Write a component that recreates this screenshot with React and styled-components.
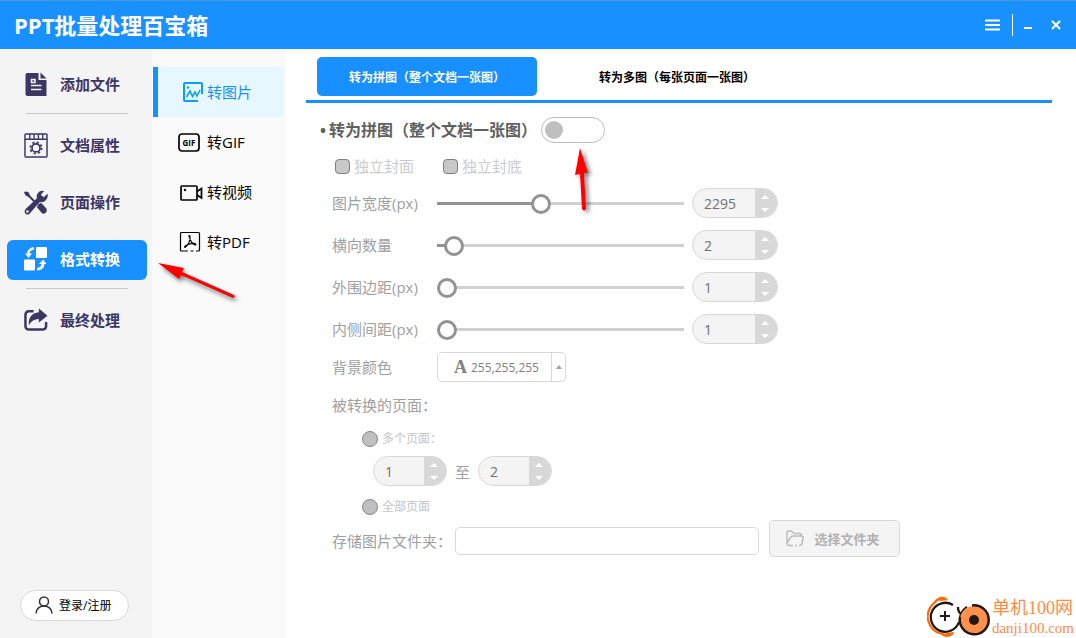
import React, { useState } from 'react'
import styled, { createGlobalStyle, css } from 'styled-components'

const GlobalStyle = createGlobalStyle`
    * {
        box-sizing: border-box;
    }

    body {
        margin: 0;
        background: #ffffff;
        font-family: "Open Sans", "Noto Sans CJK SC", sans-serif;
        font-size: 15px;
        color: #000000;
    }

    button, input, select {
        font-family: inherit;
        font-size: inherit;
        margin: 0;
    }
`

const Window = styled.div`
    position: relative;
    min-height: 100vh;
    display: flex;
    flex-direction: column;
`

const TitleBar = styled.header`
    height: 49px;
    padding: 0 12px 0 14px;
    border-top: 1px solid #4c9ad8;
    background: #1890ff;
    display: flex;
    align-items: center;
    justify-content: space-between;
`

const AppTitle = styled.h1`
    margin: 0;
    font-size: 22px;
    line-height: 32px;
    font-weight: bold;
    color: #ffffff;
`

const WindowActions = styled.div`
    display: flex;
    align-items: center;
    gap: 12px;
`

const WindowButton = styled.button`
    width: 16px;
    height: 22px;
    padding: 0;
    border: none;
    background: none;
    color: #ffffff;
    display: flex;
    align-items: center;
    justify-content: center;
`

const WindowDivider = styled.span`
    width: 1px;
    height: 22px;
    margin-right: -5px;
    background: #ffffff;
`

const Body = styled.div`
    flex: 1;
    display: flex;
`

const Sidebar = styled.nav`
    flex: 0 0 152px;
    padding: 16px 5px 17px 7px;
    background: #f4f4f4;
    display: flex;
    flex-direction: column;
`

const SideGroup = styled.div`
    display: flex;
    flex-direction: column;
    gap: 17px;
`

const SideDivider = styled.hr`
    width: 102px;
    height: 1px;
    margin: 8px 0 12px 19px;
    border: none;
    background: #c8c8c8;
    flex-shrink: 0;
`

const SideItem = styled.button`
    position: relative;
    height: 40px;
    padding: 0 0 2px 17px;
    border: none;
    border-radius: 6px;
    background: none;
    color: #3c3664;
    font-weight: bold;
    line-height: 20px;
    display: flex;
    align-items: center;
    gap: 12px;

    ${({ $active }) => $active && css`
        background: #1890ff;
        color: #ffffff;
    `}
`

const LoginButton = styled.button`
    width: 109px;
    height: 31px;
    margin: auto 0 0 13px;
    padding: 0 0 1px 14px;
    border: 1px solid #d8d8d8;
    border-radius: 16px;
    background: #ffffff;
    color: #000000;
    font-size: 12px;
    display: flex;
    align-items: center;
    gap: 6px;
`

const SubNav = styled.nav`
    flex: 0 0 134px;
    padding: 18px 2px 0 1px;
    background: #fafafa;
`

const SubItem = styled.button`
    width: 100%;
    height: 50px;
    padding: 0 0 0 20px;
    border: none;
    border-left: 5px solid transparent;
    background: none;
    color: #000000;
    line-height: 20px;
    display: flex;
    align-items: center;
    gap: 4px;

    ${({ $active }) => $active && css`
        border-left-color: #1890ff;
        background: #e6f7ff;
        color: #1890ff;
    `}
`

const Main = styled.main`
    flex: 1;
    min-width: 0;
    padding: 8px 24px 24px 20px;
`

const Tabs = styled.div`
    padding: 0 11px 4px;
    border-bottom: 3px solid #1890ff;
    display: flex;
    gap: 30px;
`

const Tab = styled.button`
    width: 220px;
    height: 39px;
    padding: 0;
    border: none;
    border-radius: 5px;
    background: ${({ $active }) => ($active ? '#1890ff' : 'transparent')};
    color: ${({ $active }) => ($active ? '#ffffff' : '#000000')};
    font-size: 12px;
    font-weight: bold;
`

const Form = styled.form`
    padding: 14px 0 0 26px;
    color: #a0a0a0;
`

const Heading = styled.div`
    height: 26px;
    margin-left: -15px;
    display: flex;
    align-items: center;
    gap: 4px;
`

const HeadingLabel = styled.label`
    font-size: 16px;
    line-height: 24px;
    font-weight: bold;
    color: #606060;
    display: flex;

    &::before {
        content: "•";
        width: 12px;
        text-align: center;
    }
`

const ToggleWrapper = styled.div`
    position: relative;
    height: 26px;
`

const Toggle = styled.input`
    appearance: none;
    width: 64px;
    height: 26px;
    padding: 0 3px;
    border: 1px solid #bcbcbc;
    border-radius: 13px;
    background: #ffffff;
    display: flex;
    align-items: center;

    &::before {
        content: "";
        width: 18px;
        height: 18px;
        border-radius: 50%;
        background: #bfbfbf;
    }

    &:checked {
        justify-content: flex-end;
        border-color: #1890ff;
    }

    &:checked::before {
        background: #1890ff;
    }
`

const CheckRow = styled.div`
    height: 20px;
    margin: 13px 0 12px 3px;
    display: flex;
    align-items: center;
    gap: 29px;
`

const CheckLabel = styled.label`
    color: #cccccc;
    line-height: 20px;
    display: flex;
    align-items: center;
    gap: 4px;
`

const Checkbox = styled.input`
    appearance: none;
    width: 15px;
    height: 15px;
    border: 1px solid #808080;
    border-radius: 4px;
    background: #c8c8c8;

    &:checked {
        background: #1890ff;
    }
`

const SliderRows = styled.div`
    display: flex;
    flex-direction: column;
    gap: 12px;
`

const Row = styled.div`
    height: 30px;
    display: flex;
    align-items: center;
`

const RowLabel = styled.label`
    flex: 0 0 105px;
    line-height: 20px;
`

const Slider = styled.input`
    appearance: none;
    flex: 0 1 247px;
    min-width: 80px;
    height: 20px;
    margin-right: 8px;
    background: none;

    &::-webkit-slider-runnable-track {
        height: 3px;
        background: linear-gradient(to right, #939393 var(--fill), #d0d0d0 var(--fill));
    }

    &::-webkit-slider-thumb {
        appearance: none;
        width: 20px;
        height: 20px;
        margin-top: -8px;
        border: 3px solid #939393;
        border-radius: 50%;
        background: #ffffff;
    }
`

const SpinBox = styled.div`
    width: ${({ $small }) => ($small ? '74px' : '86px')};
    height: 30px;
    border: 1px solid #d8d8d8;
    border-radius: 15px;
    background: #f4f4f4;
    overflow: hidden;
    display: flex;
`

const SpinInput = styled.input`
    appearance: textfield;
    flex: 1;
    min-width: 0;
    padding: 0 0 0 11px;
    border: none;
    background: none;
    color: #707070;
    font-size: 14px;

    &::-webkit-inner-spin-button {
        display: none;
    }
`

const SpinButtons = styled.div`
    width: 22px;
    padding: 1px 2px 1px 0;
    background: #d8d8d8;
    display: flex;
    flex-direction: column;
`

const SpinButton = styled.button`
    flex: 1;
    padding: 0;
    border: none;
    background: none;
    color: #ffffff;
    display: flex;
    align-items: center;
    justify-content: center;
`

const ColorRow = styled(Row)`
    margin-top: 8px;
`

const ColorBox = styled.div`
    width: 129px;
    height: 30px;
    border: 1px solid #d8d8d8;
    border-radius: 5px;
    background: #ffffff;
    display: flex;
    align-items: center;
`

const ColorLetter = styled.span`
    margin-left: 16px;
    font-family: "Liberation Serif", serif;
    font-size: 18px;
    line-height: 20px;
    font-weight: bold;
    color: #808080;
`

const ColorSelect = styled.select`
    appearance: none;
    flex: 1;
    min-width: 0;
    padding: 0 0 0 4px;
    border: none;
    background: none;
    color: #808080;
    opacity: 1;
    font-size: 12px;
`

const ColorArrow = styled.span`
    width: 14px;
    height: 28px;
    border-left: 1px solid #d8d8d8;
    color: #a0a0a0;
    display: flex;
    align-items: center;
    justify-content: center;
`

const PageRange = styled.fieldset`
    min-width: 0;
    margin: 12px 0 4px;
    padding: 0;
    border: none;
`

const Legend = styled.legend`
    height: 24px;
    padding: 0;
    margin-bottom: 12px;
    line-height: 22px;
`

const RadioLabel = styled.label`
    height: 18px;
    margin-left: 30px;
    color: #c4c4c4;
    font-size: 12px;
    line-height: 18px;
    display: flex;
    align-items: center;
    gap: 4px;
`

const Radio = styled.input`
    appearance: none;
    width: 16px;
    height: 16px;
    border: 1px solid #868686;
    border-radius: 50%;
    background: #c0c0c0;
`

const RangeRow = styled(Row)`
    margin: 8px 0 12px 41px;
    gap: 8px;
`

const FolderRow = styled.div`
    display: flex;
    align-items: flex-end;
`

const FolderLabel = styled.label`
    flex: 0 0 123px;
    line-height: 28px;
`

const FolderInput = styled.input`
    flex: 0 1 304px;
    min-width: 80px;
    height: 28px;
    margin-right: 10px;
    padding: 0 8px;
    border: 1px solid #d8d8d8;
    border-radius: 5px;
    background: #ffffff;
`

const FolderButton = styled.button`
    width: 131px;
    height: 37px;
    margin-bottom: -2px;
    padding: 0 3px 0 0;
    border: 1px solid #d8d8d8;
    border-radius: 5px;
    background: #f4f4f4;
    color: #b0b0b0;
    font-size: 13px;
    font-weight: bold;
    display: flex;
    align-items: center;
    justify-content: center;
    gap: 10px;
`

const SidePointer = styled.svg`
    position: absolute;
    left: 146px;
    top: 16px;
    z-index: 1;
    pointer-events: none;
    filter: drop-shadow(2px 3px 2px rgba(0, 0, 0, 0.5));
`

const TogglePointer = styled.svg`
    position: absolute;
    left: 30px;
    top: 30px;
    pointer-events: none;
    filter: drop-shadow(3px 2px 2px rgba(0, 0, 0, 0.5));
`

const Watermark = styled.div`
    position: absolute;
    right: 2px;
    bottom: 0;
    display: flex;
    align-items: center;
    gap: 1px;
    color: #ff8c46;
    font-family: "Liberation Serif", "Noto Sans CJK SC", serif;
`

const WatermarkName = styled.div`
    font-size: 18px;
    line-height: 22px;
`

const WatermarkSite = styled.div`
    font-size: 15px;
    line-height: 18px;
`

function FileIcon() {
    return (
        <svg width="24" height="24" viewBox="0 0 24 24">
            <path d="M3 1H14.500V8H22.500V24H3.500Q1.500 24 1.500 22V3Q1.500 1 3 1Z" fill="currentColor" />
            <path d="M16.500 0.500L22.500 6.500H16.500Z" fill="currentColor" />
            <path d="M7.500 7.500h3.500v3h-3.500zM7 13.500h10.500M7 17.500h10.500" fill="none" stroke="#f4f4f4" strokeWidth="1.6" />
        </svg>
    )
}

function PropertiesIcon() {
    return (
        <svg width="24" height="25" viewBox="0 0 25 26" fill="none" stroke="currentColor">
            <rect x="1" y="1" width="23" height="24" rx="1" strokeWidth="1.5" />
            <path d="M1 6.500H24M6 1V6M10.500 1V6M15 1V6M19.500 1V6" strokeWidth="1.4" />
            <circle cx="12.5" cy="15.5" r="4.2" strokeWidth="1.8" />
            <circle cx="12.5" cy="15.5" r="5.9" strokeWidth="1.8" strokeDasharray="2.3 2.33" />
        </svg>
    )
}

function ToolsIcon() {
    return (
        <svg width="24" height="25" viewBox="0 0 25 26" fill="currentColor">
            <path d="M1 1.500L4.500 2L6.500 6L13 12.500L11.500 14L5 7.500L1.500 5.500L0 2.500Z" />
            <path d="M15 14.500L18 13.500L23.500 19.500Q24.500 22 22.500 24Q20 25.500 18.500 24L13.500 18Z" />
            <path d="M21 1Q17 0 14.500 3Q12.500 6 13.500 8.500L2 19.500Q0 21.500 1 24Q3 26.500 5.500 25L16.500 12.500Q20 13.500 22.500 11Q25.500 8 24.500 4L20.500 7.500L17.500 5Z" />
            <circle cx="3.500" cy="22.500" r="1.300" fill="#f4f4f4" />
        </svg>
    )
}

function ConvertIcon() {
    return (
        <svg width="24" height="24" viewBox="0 0 24 24" fill="currentColor">
            <rect x="12" y="0" width="11" height="11" rx="1" />
            <rect x="0" y="12.500" width="11" height="11" rx="1" />
            <path d="M10 0V2.500Q6 3 5.500 6.500H8L4.500 11L1 6.500H3Q3.500 1 10 0Z" />
            <path d="M13 23.500V21Q17 20.500 17.500 17H15L19 12.500L22.500 17H20.500Q20 23 13 23.500Z" />
        </svg>
    )
}

function ShareIcon() {
    return (
        <svg width="24" height="24" viewBox="0 0 25 24">
            <path d="M10 3H5Q1.500 3 1.500 7V18Q1.500 22 5.500 22H19Q23 22 23 18V14" fill="none" stroke="currentColor" strokeWidth="2.600" />
            <path d="M15.500 0L24.500 7.500L15.500 14.500V11Q8.500 11 5 17.500Q4 5.500 15.500 4Z" fill="currentColor" />
        </svg>
    )
}

function UserIcon() {
    return (
        <svg width="18" height="18" viewBox="0 0 18 18" fill="none" stroke="#333333" strokeWidth="1.500">
            <circle cx="9" cy="5.500" r="4.500" />
            <path d="M1 17.500Q1.500 10.500 9 10Q16.500 10.500 17 17.500" />
        </svg>
    )
}

function PictureIcon() {
    return (
        <svg width="25" height="22" viewBox="0 0 25 22" fill="none" stroke="#0aa0f5" strokeWidth="2">
            <path d="M24 13V3Q24 2 23 2H7Q6 2 6 3V19Q6 20 7 20H20" />
            <path d="M8.500 16L12 10L14.500 15.500L17 11L19 15L22 9" strokeWidth="1.600" />
            <circle cx="10" cy="6.500" r="1.200" fill="#0aa0f5" stroke="none" />
        </svg>
    )
}

const GifText = styled.text`
    font-family: "Open Sans", sans-serif;
    font-size: 8px;
    font-weight: bold;
    text-anchor: middle;
`

function GifIcon() {
    return (
        <svg width="25" height="22" viewBox="0 0 25 22">
            <rect x="1" y="3" width="20" height="17" rx="3" fill="none" stroke="#000000" strokeWidth="1.700" />
            <GifText x="11" y="14.500">GIF</GifText>
        </svg>
    )
}

function VideoIcon() {
    return (
        <svg width="25" height="22" viewBox="0 0 25 22" fill="none" stroke="#000000" strokeWidth="1.700">
            <rect x="3" y="5" width="16" height="14" rx="1" />
            <path d="M19 10.500L23.500 7.500V17L19 14" />
            <circle cx="7" cy="9" r="1.200" fill="#000000" stroke="none" />
        </svg>
    )
}

function PdfIcon() {
    return (
        <svg width="25" height="22" viewBox="0 0 25 22" fill="none" stroke="#000000" strokeWidth="1.200">
            <path d="M10 20H3.500Q2.500 20 2.500 19V2.500Q2.500 1.500 3.500 1.500H20.500Q21.500 1.500 21.500 2.500V19Q21.500 20 20.500 20H18M12.500 20H15.500" />
            <path d="M11.200 5.500Q10.200 4.500 11.800 4.500Q12.800 8 11 11.500Q9 15.500 7 16.500Q5.800 16 8 14.500Q12 12 17 12.500Q19 13.500 17 14Q13 12.500 11.200 5.500Z" strokeWidth="1.100" />
        </svg>
    )
}

function FolderIcon() {
    return (
        <svg width="18" height="17" viewBox="0 0 18 17" fill="none" stroke="#bcbcbc" strokeWidth="1.500">
            <path d="M7 15.500H3Q1 15.500 1 13.500V3Q1 1 3 1H5.500L8 3.500H13.500Q15.500 3.500 15.500 6" />
            <path d="M1.500 13L4 8Q5 6 7 6H15.500Q17.500 6 17 8L16 13.500Q15.500 15.500 13.500 15.500H13M9 15.500H11" />
        </svg>
    )
}

function Triangle({ down, width = 8, height = 4 }) {
    return (
        <svg width={width} height={height} viewBox="0 0 8 4" preserveAspectRatio="none">
            <path d={down ? 'M0 0H8L4 4Z' : 'M0 4H8L4 0Z'} fill="currentColor" />
        </svg>
    )
}

function NumberBox({ id, label, value, onChange, min, max, small, disabled }) {
    const step = (amount) => onChange(Math.min(max, Math.max(min, value + amount)))

    return (
        <SpinBox $small={small}>
            <SpinInput
                id={id}
                type="number"
                aria-label={label}
                min={min}
                max={max}
                value={value}
                disabled={disabled}
                onChange={(e) => onChange(Number(e.target.value))}
            />
            <SpinButtons>
                <SpinButton type="button" aria-label={`${label} +`} disabled={disabled} onClick={() => step(1)}>
                    <Triangle />
                </SpinButton>
                <SpinButton type="button" aria-label={`${label} -`} disabled={disabled} onClick={() => step(-1)}>
                    <Triangle down />
                </SpinButton>
            </SpinButtons>
        </SpinBox>
    )
}

function SliderRow({ id, label, min, max, initial, disabled }) {
    const [value, setValue] = useState(initial)
    const ratio = (value - min) / (max - min)

    return (
        <Row>
            <RowLabel htmlFor={id}>{label}</RowLabel>
            <Slider
                id={id}
                type="range"
                min={min}
                max={max}
                value={value}
                disabled={disabled}
                onChange={(e) => setValue(Number(e.target.value))}
                style={{ '--fill': `${ratio * 100}%` }}
            />
            <NumberBox label={label} min={min} max={max} value={value} onChange={setValue} disabled={disabled} />
        </Row>
    )
}

const sliders = [
    { id: 'width', label: '图片宽度(px)', min: 0, max: 5544, initial: 2295 },
    { id: 'columns', label: '横向数量', min: 1, max: 33, initial: 2 },
    { id: 'outer', label: '外围边距(px)', min: 1, max: 100, initial: 1 },
    { id: 'inner', label: '内侧间距(px)', min: 1, max: 100, initial: 1 },
]

const formats = [
    { name: '转图片', icon: <PictureIcon /> },
    { name: '转GIF', icon: <GifIcon /> },
    { name: '转视频', icon: <VideoIcon /> },
    { name: '转PDF', icon: <PdfIcon /> },
]

export default function App() {
    const [format, setFormat] = useState('转图片')
    const [tab, setTab] = useState('single')
    const [enabled, setEnabled] = useState(false)
    const [from, setFrom] = useState(1)
    const [to, setTo] = useState(2)

    return (
        <Window>
            <GlobalStyle />
            <TitleBar>
                <AppTitle>PPT批量处理百宝箱</AppTitle>
                <WindowActions>
                    <WindowButton aria-label="菜单">
                        <svg width="15" height="12" viewBox="0 0 15 12">
                            <path d="M0 1.500H15M0 6H15M0 10.500H15" stroke="currentColor" strokeWidth="2" />
                        </svg>
                    </WindowButton>
                    <WindowDivider />
                    <WindowButton aria-label="最小化">
                        <svg width="8" height="10" viewBox="0 0 8 10">
                            <path d="M0 8H8" stroke="currentColor" strokeWidth="2" />
                        </svg>
                    </WindowButton>
                    <WindowButton aria-label="关闭">
                        <svg width="10" height="10" viewBox="0 0 10 10">
                            <path d="M1 1L9 9M9 1L1 9" stroke="currentColor" strokeWidth="2" />
                        </svg>
                    </WindowButton>
                </WindowActions>
            </TitleBar>

            <Body>
                <Sidebar>
                    <SideItem><FileIcon />添加文件</SideItem>
                    <SideDivider />
                    <SideGroup>
                        <SideItem><PropertiesIcon />文档属性</SideItem>
                        <SideItem><ToolsIcon />页面操作</SideItem>
                        <SideItem $active>
                            <ConvertIcon />
                            格式转换
                            <SidePointer width="90" height="50" viewBox="0 0 90 50">
                                <path d="M5 7L31 12L29 16L81 39Q83 41 80 42L28 19L26 23Z" fill="#ff0000" />
                            </SidePointer>
                        </SideItem>
                    </SideGroup>
                    <SideDivider />
                    <SideItem><ShareIcon />最终处理</SideItem>
                    <LoginButton><UserIcon />登录/注册</LoginButton>
                </Sidebar>

                <SubNav>
                    {formats.map(({ name, icon }) => (
                        <SubItem key={name} $active={format === name} onClick={() => setFormat(name)}>
                            {icon}
                            {name}
                        </SubItem>
                    ))}
                </SubNav>

                <Main>
                    <Tabs>
                        <Tab $active={tab === 'single'} onClick={() => setTab('single')}>转为拼图（整个文档一张图）</Tab>
                        <Tab $active={tab === 'multi'} onClick={() => setTab('multi')}>转为多图（每张页面一张图）</Tab>
                    </Tabs>

                    <Form onSubmit={(e) => e.preventDefault()}>
                        <Heading>
                            <HeadingLabel htmlFor="enabled">转为拼图（整个文档一张图）</HeadingLabel>
                            <ToggleWrapper>
                                <Toggle id="enabled" type="checkbox" role="switch" checked={enabled} onChange={() => setEnabled(!enabled)} />
                                <TogglePointer width="24" height="68" viewBox="0 0 24 68">
                                    <path d="M9 1L17 26L13 26L15 62Q13 65 11 62L9 27L4 28Z" fill="#ff0000" />
                                </TogglePointer>
                            </ToggleWrapper>
                        </Heading>

                        <CheckRow>
                            <CheckLabel><Checkbox type="checkbox" disabled={!enabled} />独立封面</CheckLabel>
                            <CheckLabel><Checkbox type="checkbox" disabled={!enabled} />独立封底</CheckLabel>
                        </CheckRow>

                        <SliderRows>
                            {sliders.map((slider) => (
                                <SliderRow key={slider.id} {...slider} disabled={!enabled} />
                            ))}
                        </SliderRows>

                        <ColorRow>
                            <RowLabel htmlFor="color">背景颜色</RowLabel>
                            <ColorBox>
                                <ColorLetter>A</ColorLetter>
                                <ColorSelect id="color" disabled={!enabled}>
                                    <option>255,255,255</option>
                                </ColorSelect>
                                <ColorArrow><Triangle width={6} height={4} /></ColorArrow>
                            </ColorBox>
                        </ColorRow>

                        <PageRange>
                            <Legend>被转换的页面：</Legend>
                            <RadioLabel><Radio type="radio" name="pages" disabled={!enabled} />多个页面：</RadioLabel>
                            <RangeRow>
                                <NumberBox small label="起始页" min={1} max={999} value={from} onChange={setFrom} disabled={!enabled} />
                                至
                                <NumberBox small label="结束页" min={1} max={999} value={to} onChange={setTo} disabled={!enabled} />
                            </RangeRow>
                            <RadioLabel><Radio type="radio" name="pages" disabled={!enabled} />全部页面</RadioLabel>
                        </PageRange>

                        <FolderRow>
                            <FolderLabel htmlFor="folder">存储图片文件夹：</FolderLabel>
                            <FolderInput id="folder" type="text" disabled={!enabled} />
                            <FolderButton type="button" disabled={!enabled}><FolderIcon />选择文件夹</FolderButton>
                        </FolderRow>
                    </Form>
                </Main>
            </Body>

            <Watermark>
                <svg width="64" height="42" viewBox="0 0 64 42" fill="none">
                    <path d="M20 4Q14 -1 8 6Q-1 14 1 24Q4 36 15 38Q21 42 26 37" stroke="#ff6a00" strokeWidth="2.200" />
                    <path d="M10 4Q16 -2 20 4L14 5Z" fill="#ff6a00" />
                    <path d="M16 38Q22 44 27 36L20 37Z" fill="#ff6a00" />
                    <path d="M26 9A14.500 14.500 0 1 0 32 26M31 11Q31 16 34 18M40 11Q35 14 33 21" stroke="#231815" strokeWidth="2.300" />
                    <path d="M18 15V25M13 20H23" stroke="#231815" strokeWidth="2" />
                    <circle cx="47" cy="24" r="14" fill="#ff914d" />
                    <path d="M45 9.500A14.500 14.500 0 1 1 33 21" stroke="#231815" strokeWidth="2.500" />
                    <circle cx="47" cy="24" r="5" fill="#231815" />
                </svg>
                <div>
                    <WatermarkName>单机100网</WatermarkName>
                    <WatermarkSite>danji100.com</WatermarkSite>
                </div>
            </Watermark>
        </Window>
    )
}
